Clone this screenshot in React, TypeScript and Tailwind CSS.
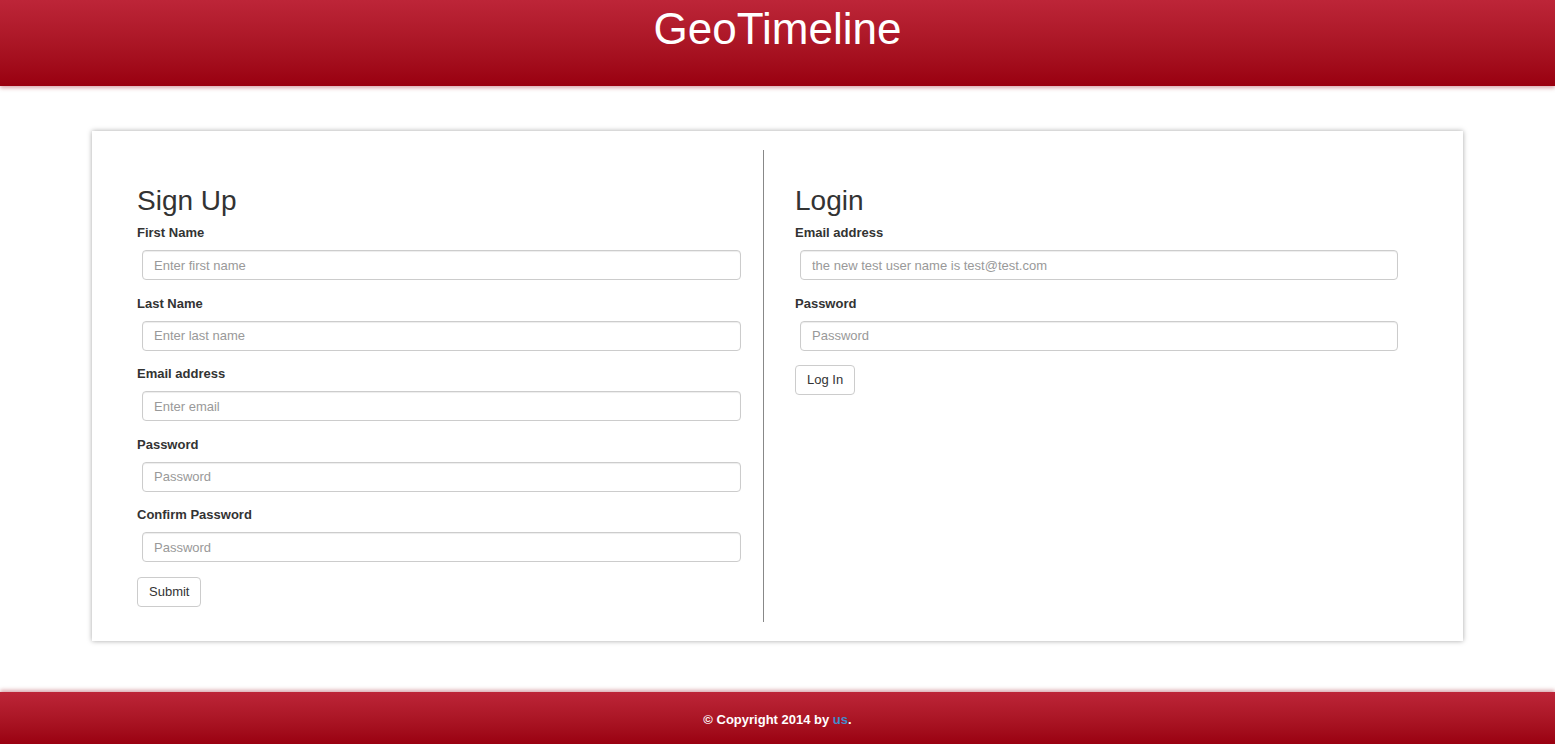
const font = { fontFamily: '"Liberation Sans", Arial, Helvetica, sans-serif' };

function Field({ label, placeholder, type = "text" }: { label: string; placeholder: string; type?: string }) {
  return (
    <div className="mb-[14.5px]">
      <label className="block text-[13px] leading-[18px] font-bold text-[#333] mb-[8px]">{label}</label>
      <input
        type={type}
        placeholder={placeholder}
        className="block ml-[5px] w-[calc(100%-5px)] h-[30px] px-[11px] text-[13px] text-[#555] placeholder:text-[#999] bg-white border border-[#ccc] rounded-[4px] shadow-[inset_0_1px_1px_rgba(0,0,0,0.075)] outline-none"
      />
    </div>
  );
}

function Btn({ children }: { children: string }) {
  return (
    <button className="h-[30px] px-[11px] text-[13px] text-[#333] bg-white border border-[#ccc] rounded-[4px]">
      {children}
    </button>
  );
}

export default function App() {
  return (
    <div style={font} className="min-h-[744px] bg-white flex flex-col">
      {/* header */}
      <header className="h-[86px] bg-gradient-to-b from-[#bd2538] to-[#99000f] shadow-[0_2px_4px_rgba(150,0,20,0.35)] relative z-10">
        <h1 className="text-center text-white text-[44px] leading-[56px] pt-[1px]">GeoTimeline</h1>
      </header>

      <main className="flex-1 px-[92px] pt-[45px]">
        <div className="flex bg-white shadow-[0_0_5px_rgba(0,0,0,0.35)] py-[19px] h-[510px]">
          <div className="w-[672px] border-r border-[#888] pl-[45px] pr-[22px]">
            <h2 className="text-[28px] leading-[31px] text-[#333] mt-[35px] mb-[8px]">Sign Up</h2>
            <Field label="First Name" placeholder="Enter first name" />
            <Field label="Last Name" placeholder="Enter last name" />
            <Field label="Email address" placeholder="Enter email" type="email" />
            <Field label="Password" placeholder="Password" type="password" />
            <Field label="Confirm Password" placeholder="Password" type="password" />
            <Btn>Submit</Btn>
          </div>
          <div className="flex-1 pl-[31px] pr-[65px]">
            <h2 className="text-[28px] leading-[31px] text-[#333] mt-[35px] mb-[8px]">Login</h2>
            <Field label="Email address" placeholder="the new test user name is test@test.com" type="email" />
            <Field label="Password" placeholder="Password" type="password" />
            <Btn>Log In</Btn>
          </div>
        </div>
      </main>

      {/* footer */}
      <footer className="h-[53px] mt-[51px] pt-[3px] bg-gradient-to-b from-[#bd2538] to-[#99000f] shadow-[0_-2px_4px_rgba(150,0,20,0.35)] flex items-center justify-center">
        <p className="text-white text-[13px] font-bold">
          © Copyright 2014 by <a href="#" className="text-[#428bca]">us</a>.
        </p>
      </footer>
    </div>
  );
}
